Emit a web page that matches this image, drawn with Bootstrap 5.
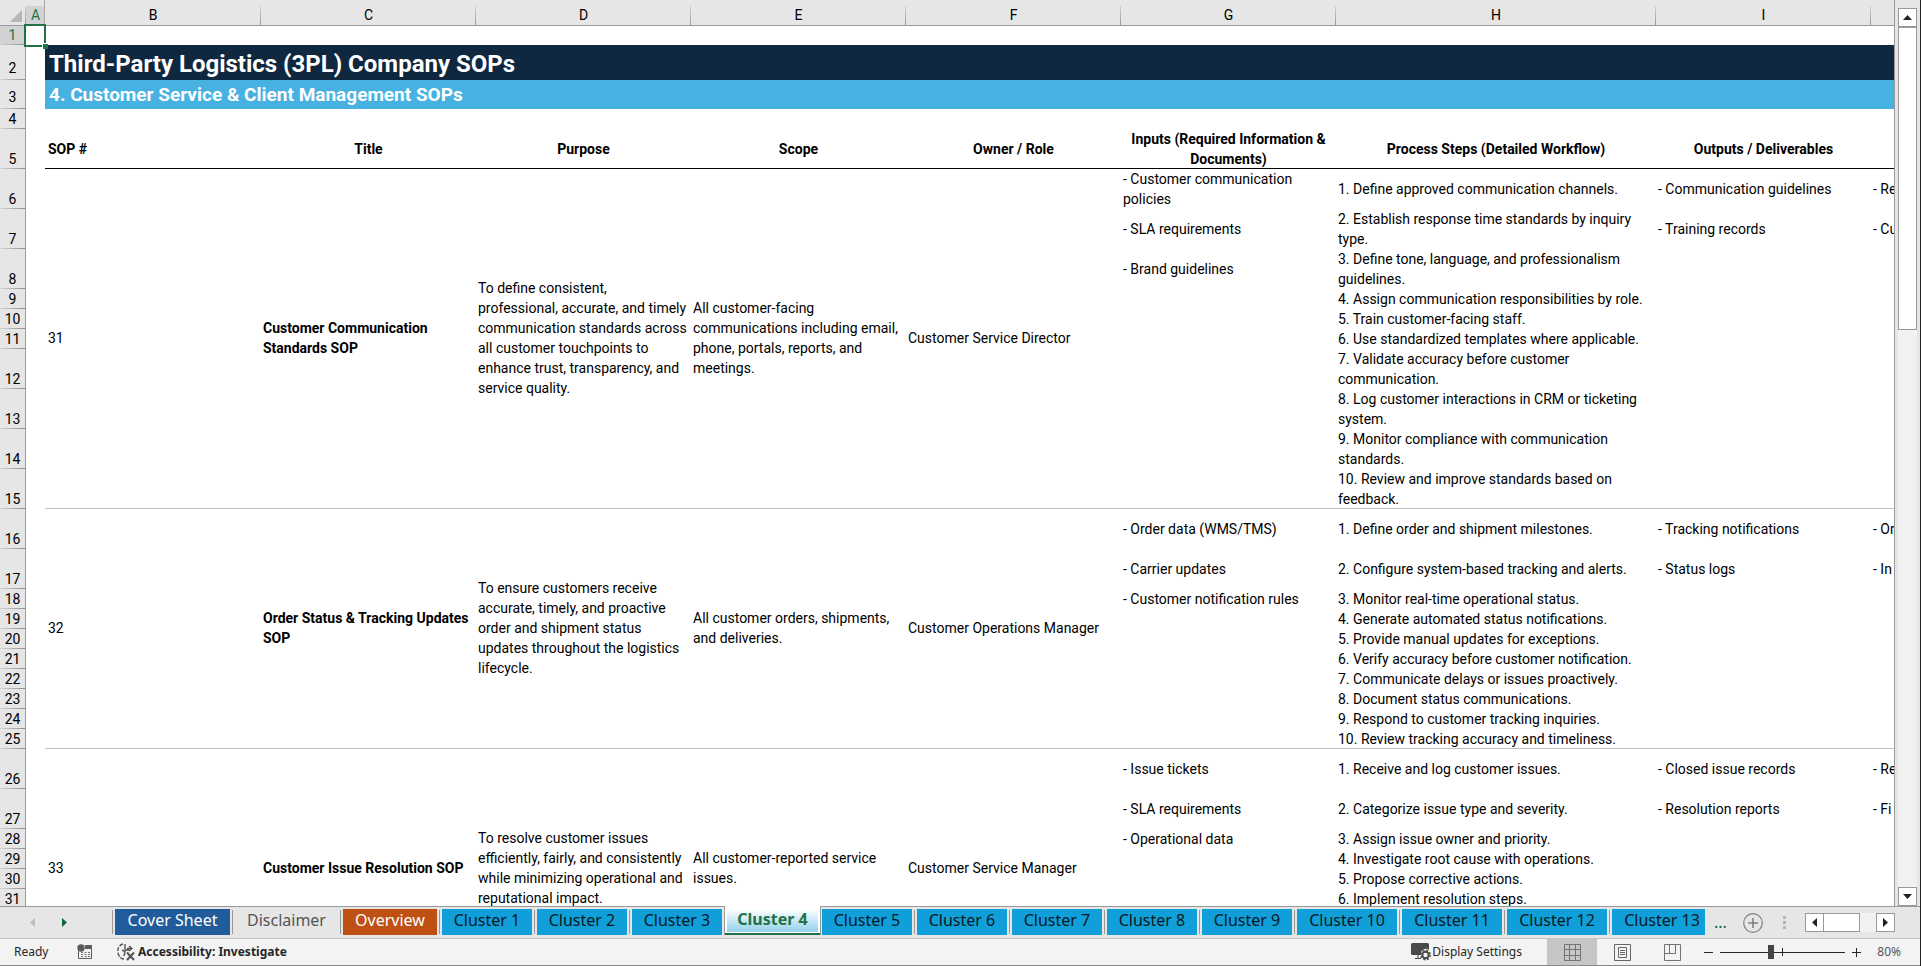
<!DOCTYPE html>
<html lang="en">
<head>
<meta charset="utf-8">
<meta name="viewport" content="width=device-width, initial-scale=1">
<title>Third-Party Logistics (3PL) Company SOPs</title>
<link href="https://cdn.jsdelivr.net/npm/bootstrap@5.3.0/dist/css/bootstrap.min.css" rel="stylesheet">
<style>
  :root { --chrome: #e6e6e6; --line: #999; --green: #217346; --ui: "Noto Sans", "Open Sans", sans-serif; --cell: Roboto, "Liberation Sans", sans-serif; }
  body { background: var(--chrome); font: 14px/20px var(--cell); color: #000; border-right: 1px solid #222; }
  button { font-family: var(--ui); }

  /* grid */
  .pane { min-width: 0; border-right: 1px solid var(--line); background: #fff; }
  .sheet { table-layout: fixed; width: 100%; min-width: 1871px; border-collapse: separate; border-spacing: 0; }
  .sheet td, .sheet th { padding: 0 0 0 2px; white-space: nowrap; vertical-align: middle; }
  .w-rows { width: 26px; } .w-a { width: 19px; } .w-first { width: 216px; } .w-std { width: 215px; } .w-steps { width: 320px; }
  .sheet .letters th {
    height: 26px; padding: 6px 0 0; font-weight: 400; line-height: 19px; text-align: center;
    border-bottom: 1px solid var(--line);
    background: linear-gradient(#d0d0d0, #999) right 6px / 1px 19px no-repeat var(--chrome);
  }
  .letters th:last-child { background: var(--chrome) !important; }
  .sheet .letters .picked { color: var(--green); background: linear-gradient(#d2d2d2, #d2d2d2) 0 6px no-repeat var(--chrome); box-shadow: inset -1px 0 #aaa; }
  .sheet .rownum {
    padding: 0; font-weight: 400; text-align: center; vertical-align: bottom;
    border-right: 1px solid var(--line);
    background: linear-gradient(90deg, #d4d4d4, #8f8f8f) bottom / 100% 1px no-repeat var(--chrome);
  }
  .sheet .rownum.picked { background-color: #d2d2d2; color: var(--green); }
  .r20 { height: 20px; } .r40 { height: 40px; } .r-first { height: 19px; } .r-title { height: 35px; } .r-sub { height: 29px; }
  .r-first .rownum { line-height: 19px; }
  .r-title .rownum, .r-sub .rownum { line-height: 24px; }
  .sheet .banner { background: #0f2840; color: #fff; font-size: 24px; line-height: 32px; font-weight: 700; padding: 3px 0 0 4px; }
  .sheet .subbanner { background: #47b1e1; color: #fff; font-size: 19px; line-height: 28px; font-weight: 700; padding-left: 4px; }
  .sheet .heads th { text-align: center; padding: 0; box-shadow: inset 0 -1px #000; }
  .sheet .heads th:nth-child(3) { text-align: left; padding-left: 3px; }
  .sheet .heads .rownum { box-shadow: none; }
  .sheet .merged { padding-bottom: 2px; }
  .sheet .sopno { padding-left: 3px; }
  .ends, .closing td.c { box-shadow: inset 0 -1px #bfbfbf; }
  .cursor { position: absolute; top: -2px; left: -2px; width: 22px; height: 23px; border: 2px solid var(--green); }
  .cursor::after { content: ""; position: absolute; right: -4px; bottom: -4px; width: 6px; height: 6px; background: var(--green); border: solid #fff; border-width: 1px 0 0 1px; }

  /* scroll bars */
  .vbar { width: 25px; padding: 8px 3px 0; }
  .sbtn { width: 19px; height: 19px; padding: 0; border: 1px solid var(--line); background: #fff; flex: none; display: flex; align-items: center; justify-content: center; }
  .track { background: #f1f1f1; }
  .vthumb { height: 303px; background: #fff; border: 1px solid var(--line); }
  .hthumb { width: 36px; background: #fff; border: 1px solid var(--line); border-left: 0; }

  /* sheet tabs */
  .tabbar { height: 32px; border-top: 1px solid var(--line); }
  .tabnav { width: 112px; padding: 11px 0 0 30px; gap: 27px; }
  .tabnav button { width: 5px; border: 0; padding: 0; background: none; display: flex; }
  .tablist { flex: 1 1 0; min-width: 0; margin-top: -1px; }
  .tablist li { flex: none; padding: 3px 2px 0 3px; background: linear-gradient(#999, #999) 0 4px / 1px 24px no-repeat; }
  .tablist button { width: 90px; height: 26px; border: 0; padding: 0 0 4px; font-size: 16px; line-height: 22px; background: #119fd9; color: #071a24; display: block; }
  .tablist .t-cover { width: 115px; background: #205c9b; color: #fff; }
  .tablist .t-disc { width: 103px; background: none; color: #555; }
  .tablist .t-over { width: 94px; background: #bf5014; color: #fff; }
  .tablist .t-wide { width: 100px; }
  .tablist .current { background: #fff; border: solid var(--line); border-width: 0 1px; padding: 3px 2px 0; box-shadow: inset 0 -2px var(--green); height: 29px; position: relative; width: 97px; margin-right: -2px; }
  .tablist .current button { width: 91px; height: 23px; padding: 0 0 2px; line-height: 21px; font-weight: 700; color: var(--green); background: linear-gradient(#fff, #93d1ec); }
  .tabtools { width: 215px; padding: 0 25px 0 9px; }
  .more { width: 29px; color: #0c6a3a; border: 0; background: none; padding: 0 0 2px; text-align: left; font-size: 16px; line-height: 20px; }
  .plain { border: 0; background: none; padding: 0; display: flex; align-items: center; justify-content: center; }

  /* status bar */
  .status { height: 28px; background: #f3f3f3; border-top: 1px solid #c6c6c6; border-bottom: 1px solid #8a8a8a; font: 12px/16px var(--ui); color: #262626; }
  .view { width: 50px; } .view.on { background: #c6c6c6; }
  .zoomer { width: 125px; height: 26px; }
  .zoomer input { appearance: none; width: 125px; height: 14px; margin: 0; background: linear-gradient(#262626, #262626) center / 100% 1px no-repeat, linear-gradient(#262626, #262626) 62px 50% / 1px 8px no-repeat; display: block; }
  .zoomer input::-webkit-slider-thumb { appearance: none; width: 6px; height: 14px; background: #444; }
  .zoomer input::-moz-range-thumb { width: 6px; height: 14px; border: 0; border-radius: 0; background: #444; }
  .s-ready { width: 77px; padding-left: 14px; }
  .s-access { margin-left: 23px; gap: 2px; }
  .s-display { margin-right: 25px; gap: 1px; }
  .s-minus { width: 23px; } .s-plus { width: 22px; }
  .s-pct { width: 53px; padding: 0 19px 0 8px; color: #555; }
</style>
</head>
<body class="vh-100 d-flex flex-column overflow-hidden">

<main class="d-flex flex-fill overflow-hidden">
  <div class="pane flex-fill overflow-hidden">
    <table class="sheet">
      <colgroup><col class="w-rows"><col class="w-a"><col class="w-first"><col class="w-std"><col class="w-std"><col class="w-std"><col class="w-std"><col class="w-std"><col class="w-steps"><col class="w-std"><col></colgroup>
      <thead>
        <tr class="letters">
          <th><svg class="d-block ms-auto me-1" width="12" height="12" aria-hidden="true"><path d="M12 0v12H0z" fill="#b7b7b7"/></svg></th>
          <th class="picked">A</th><th>B</th><th>C</th><th>D</th><th>E</th><th>F</th><th>G</th><th>H</th><th>I</th><th></th>
        </tr>
      </thead>
      <tbody>
        <tr class="r-first"><th class="rownum picked">1</th><td class="position-relative"><div class="cursor"></div></td><td colspan="9"></td></tr>
        <tr class="r-title"><th class="rownum">2</th><td></td><td colspan="9" class="banner">Third-Party Logistics (3PL) Company SOPs</td></tr>
        <tr class="r-sub"><th class="rownum">3</th><td></td><td colspan="9" class="subbanner">4. Customer Service &amp; Client Management SOPs</td></tr>
        <tr class="r20"><th class="rownum">4</th><td colspan="10"></td></tr>
        <tr class="r40 heads"><th class="rownum">5</th><td></td><th>SOP #</th><th>Title</th><th>Purpose</th><th>Scope</th><th>Owner / Role</th><th>Inputs (Required Information &amp;<br>Documents)</th><th>Process Steps (Detailed Workflow)</th><th>Outputs / Deliverables</th><th></th></tr>

        <tr class="r40"><th class="rownum">6</th><td></td>
          <td rowspan="10" class="merged ends sopno">31</td>
          <td rowspan="10" class="merged ends fw-bold">Customer Communication<br>Standards SOP</td>
          <td rowspan="10" class="merged ends">To define consistent,<br>professional, accurate, and timely<br>communication standards across<br>all customer touchpoints to<br>enhance trust, transparency, and<br>service quality.</td>
          <td rowspan="10" class="merged ends">All customer-facing<br>communications including email,<br>phone, portals, reports, and<br>meetings.</td>
          <td rowspan="10" class="merged ends">Customer Service Director</td>
          <td>- Customer communication<br>policies</td><td>1. Define approved communication channels.</td><td>- Communication guidelines</td><td>- Re</td></tr>
        <tr class="r40"><th class="rownum">7</th><td></td><td>- SLA requirements</td><td>2. Establish response time standards by inquiry<br>type.</td><td>- Training records</td><td>- Cu</td></tr>
        <tr class="r40"><th class="rownum">8</th><td></td><td>- Brand guidelines</td><td>3. Define tone, language, and professionalism<br>guidelines.</td><td></td><td></td></tr>
        <tr class="r20"><th class="rownum">9</th><td></td><td></td><td>4. Assign communication responsibilities by role.</td><td></td><td></td></tr>
        <tr class="r20"><th class="rownum">10</th><td></td><td></td><td>5. Train customer-facing staff.</td><td></td><td></td></tr>
        <tr class="r20"><th class="rownum">11</th><td></td><td></td><td>6. Use standardized templates where applicable.</td><td></td><td></td></tr>
        <tr class="r40"><th class="rownum">12</th><td></td><td></td><td>7. Validate accuracy before customer<br>communication.</td><td></td><td></td></tr>
        <tr class="r40"><th class="rownum">13</th><td></td><td></td><td>8. Log customer interactions in CRM or ticketing<br>system.</td><td></td><td></td></tr>
        <tr class="r40"><th class="rownum">14</th><td></td><td></td><td>9. Monitor compliance with communication<br>standards.</td><td></td><td></td></tr>
        <tr class="r40 closing"><th class="rownum">15</th><td></td><td class="c"></td><td class="c">10. Review and improve standards based on<br>feedback.</td><td class="c"></td><td class="c"></td></tr>

        <tr class="r40"><th class="rownum">16</th><td></td>
          <td rowspan="10" class="merged ends sopno">32</td>
          <td rowspan="10" class="merged ends fw-bold">Order Status &amp; Tracking Updates<br>SOP</td>
          <td rowspan="10" class="merged ends">To ensure customers receive<br>accurate, timely, and proactive<br>order and shipment status<br>updates throughout the logistics<br>lifecycle.</td>
          <td rowspan="10" class="merged ends">All customer orders, shipments,<br>and deliveries.</td>
          <td rowspan="10" class="merged ends">Customer Operations Manager</td>
          <td>- Order data (WMS/TMS)</td><td>1. Define order and shipment milestones.</td><td>- Tracking notifications</td><td>- Or</td></tr>
        <tr class="r40"><th class="rownum">17</th><td></td><td>- Carrier updates</td><td>2. Configure system-based tracking and alerts.</td><td>- Status logs</td><td>- In</td></tr>
        <tr class="r20"><th class="rownum">18</th><td></td><td>- Customer notification rules</td><td>3. Monitor real-time operational status.</td><td></td><td></td></tr>
        <tr class="r20"><th class="rownum">19</th><td></td><td></td><td>4. Generate automated status notifications.</td><td></td><td></td></tr>
        <tr class="r20"><th class="rownum">20</th><td></td><td></td><td>5. Provide manual updates for exceptions.</td><td></td><td></td></tr>
        <tr class="r20"><th class="rownum">21</th><td></td><td></td><td>6. Verify accuracy before customer notification.</td><td></td><td></td></tr>
        <tr class="r20"><th class="rownum">22</th><td></td><td></td><td>7. Communicate delays or issues proactively.</td><td></td><td></td></tr>
        <tr class="r20"><th class="rownum">23</th><td></td><td></td><td>8. Document status communications.</td><td></td><td></td></tr>
        <tr class="r20"><th class="rownum">24</th><td></td><td></td><td>9. Respond to customer tracking inquiries.</td><td></td><td></td></tr>
        <tr class="r20 closing"><th class="rownum">25</th><td></td><td class="c"></td><td class="c">10. Review tracking accuracy and timeliness.</td><td class="c"></td><td class="c"></td></tr>

        <tr class="r40"><th class="rownum">26</th><td></td>
          <td rowspan="10" class="merged sopno">33</td>
          <td rowspan="10" class="merged fw-bold">Customer Issue Resolution SOP</td>
          <td rowspan="10" class="merged">To resolve customer issues<br>efficiently, fairly, and consistently<br>while minimizing operational and<br>reputational impact.</td>
          <td rowspan="10" class="merged">All customer-reported service<br>issues.</td>
          <td rowspan="10" class="merged">Customer Service Manager</td>
          <td>- Issue tickets</td><td>1. Receive and log customer issues.</td><td>- Closed issue records</td><td>- Re</td></tr>
        <tr class="r40"><th class="rownum">27</th><td></td><td>- SLA requirements</td><td>2. Categorize issue type and severity.</td><td>- Resolution reports</td><td>- Fi</td></tr>
        <tr class="r20"><th class="rownum">28</th><td></td><td>- Operational data</td><td>3. Assign issue owner and priority.</td><td></td><td></td></tr>
        <tr class="r20"><th class="rownum">29</th><td></td><td></td><td>4. Investigate root cause with operations.</td><td></td><td></td></tr>
        <tr class="r20"><th class="rownum">30</th><td></td><td></td><td>5. Propose corrective actions.</td><td></td><td></td></tr>
        <tr class="r20"><th class="rownum">31</th><td></td><td></td><td>6. Implement resolution steps.</td><td></td><td></td></tr>
        <tr class="r20"><th class="rownum"></th><td></td><td></td><td></td><td></td><td></td></tr>
        <tr class="r20"><th class="rownum"></th><td></td><td></td><td></td><td></td><td></td></tr>
        <tr class="r20"><th class="rownum"></th><td></td><td></td><td></td><td></td><td></td></tr>
        <tr class="r20"><th class="rownum"></th><td></td><td></td><td></td><td></td><td></td></tr>
      </tbody>
    </table>
  </div>
  <div class="vbar d-flex flex-column flex-shrink-0">
    <button class="sbtn" aria-label="Scroll up"><svg width="9" height="5"><path d="M0 5h9L4.500 0z" fill="#222"/></svg></button>
    <div class="track flex-fill"><div class="vthumb"></div></div>
    <button class="sbtn" aria-label="Scroll down"><svg width="9" height="5"><path d="M0 0h9L4.500 5z" fill="#222"/></svg></button>
  </div>
</main>

<nav class="tabbar d-flex flex-shrink-0" aria-label="Sheets">
  <div class="tabnav d-flex flex-shrink-0 align-items-start">
    <button aria-label="Previous sheets"><svg width="5" height="9"><path d="M5 0v9L0 4.500z" fill="#bdbdbd"/></svg></button>
    <button aria-label="Next sheets"><svg width="5" height="9"><path d="M0 0v9l5-4.500z" fill="#0c6a3a"/></svg></button>
  </div>
  <ul class="tablist list-unstyled d-flex mb-0 overflow-hidden">
    <li><button class="t-cover">Cover Sheet</button></li>
    <li><button class="t-disc">Disclaimer</button></li>
    <li><button class="t-over">Overview</button></li>
    <li><button>Cluster 1</button></li>
    <li><button>Cluster 2</button></li>
    <li><button>Cluster 3</button></li>
    <li class="current"><button aria-current="page">Cluster 4</button></li>
    <li><button>Cluster 5</button></li>
    <li><button>Cluster 6</button></li>
    <li><button>Cluster 7</button></li>
    <li><button>Cluster 8</button></li>
    <li><button>Cluster 9</button></li>
    <li><button class="t-wide">Cluster 10</button></li>
    <li><button class="t-wide">Cluster 11</button></li>
    <li><button class="t-wide">Cluster 12</button></li>
    <li><button class="t-wide">Cluster 13</button></li>
  </ul>
  <div class="tabtools d-flex flex-shrink-0 align-items-center">
    <button class="more" aria-label="More sheets">...</button>
    <button class="plain" aria-label="New sheet"><svg width="20" height="20" fill="none" stroke="#808080"><circle cx="10" cy="10" r="9.300" stroke-width="1.200"/><path d="M10 5v10M5 10h10" stroke-width="1.600"/></svg></button>
    <svg class="mx-auto" width="3" height="13" fill="#b5b5b5"><path d="M0 0h3v3H0zM0 5h3v3H0zM0 10h3v3H0z"/></svg>
    <div class="d-flex track">
      <button class="sbtn" aria-label="Scroll left"><svg width="5" height="9"><path d="M5 0v9L0 4.500z" fill="#222"/></svg></button>
      <div class="hthumb"></div>
      <button class="sbtn ms-3" aria-label="Scroll right"><svg width="5" height="9"><path d="M0 0v9l5-4.500z" fill="#222"/></svg></button>
    </div>
  </div>
</nav>

<footer class="status d-flex flex-shrink-0 align-items-center">
  <span class="s-ready">Ready</span>
  <button class="plain" aria-label="Record macro"><svg width="16" height="16"><path d="M1.500 7v7.500h13v-13H8" fill="none" stroke="#5c5c5c"/><path d="M8 1h7v4H8z" fill="#5c5c5c"/><circle cx="4" cy="4" r="3.700" fill="#5c5c5c"/><path d="M4 8.500h2m1.500 0h2m1.500 0h2M4 10.500h2m1.500 0h2m1.500 0h2M4 12.500h2m1.500 0h2m1.500 0h2" stroke="#777"/></svg></button>
  <button class="plain fw-bold text-reset s-access"><svg width="20" height="20" fill="none" stroke="#555" stroke-width="1.400"><path d="M7 2C3 3 1 7 2 11s3 6 6 6" stroke-dasharray="4 1.500"/><path d="M9 2v6M6 8l3 1.500L8 14M9 8h4M13 4l3 2.500L13 9M11 6.500h5"/><path d="M11 10.500l7 7.500M18 10.500L11 18" stroke-width="2"/></svg>Accessibility: Investigate</button>
  <button class="plain text-reset ms-auto s-display"><svg width="20" height="18"><path d="M1.500 0h15A1.500 1.500 0 0 1 18 1.500V7a5 5 0 0 0-8 5H1.500A1.500 1.500 0 0 1 0 10.500v-9A1.500 1.500 0 0 1 1.500 0z" fill="#4a4a4a"/><path d="M4 15.500h6M7 12v3" stroke="#4a4a4a"/><circle cx="14.500" cy="12" r="3.200" fill="none" stroke="#4a4a4a" stroke-width="2"/><circle cx="14.500" cy="12" r="4.700" fill="none" stroke="#4a4a4a" stroke-width="1.500" stroke-dasharray="2 1.700"/></svg>Display Settings</button>
  <button class="plain view on align-self-stretch" aria-label="Normal"><svg width="17" height="17" fill="none" stroke="#737373"><path d="M.5.500h16v16H.5zM5.500.500v16M11.500.500v16M.5 5.500h16M.5 11.500h16"/></svg></button>
  <button class="plain view" aria-label="Page layout"><svg width="17" height="17" fill="none" stroke="#666"><path d="M.5.500h16v16H.5zM4.500 3.500h8v10h-8zM6 6.500h5M6 8.500h5M6 10.500h5"/></svg></button>
  <button class="plain view" aria-label="Page break preview"><svg width="17" height="17" fill="none" stroke="#737373"><path d="M.5.500h16v16H.5zM5.500.500v9M11.500.500v9M.5 9.500h11"/></svg></button>
  <button class="plain s-minus" aria-label="Zoom out"><svg width="9" height="9"><path d="M0 4.500h9" stroke="#262626"/></svg></button>
  <div class="zoomer d-flex align-items-center"><input type="range" min="0" max="100" value="40" aria-label="Zoom"></div>
  <button class="plain s-plus" aria-label="Zoom in"><svg width="9" height="9"><path d="M0 4.500h9M4.500 0v9" stroke="#262626"/></svg></button>
  <span class="text-end s-pct">80%</span>
</footer>

<script src="https://cdn.jsdelivr.net/npm/bootstrap@5.3.0/dist/js/bootstrap.bundle.min.js"></script>
</body>
</html>
